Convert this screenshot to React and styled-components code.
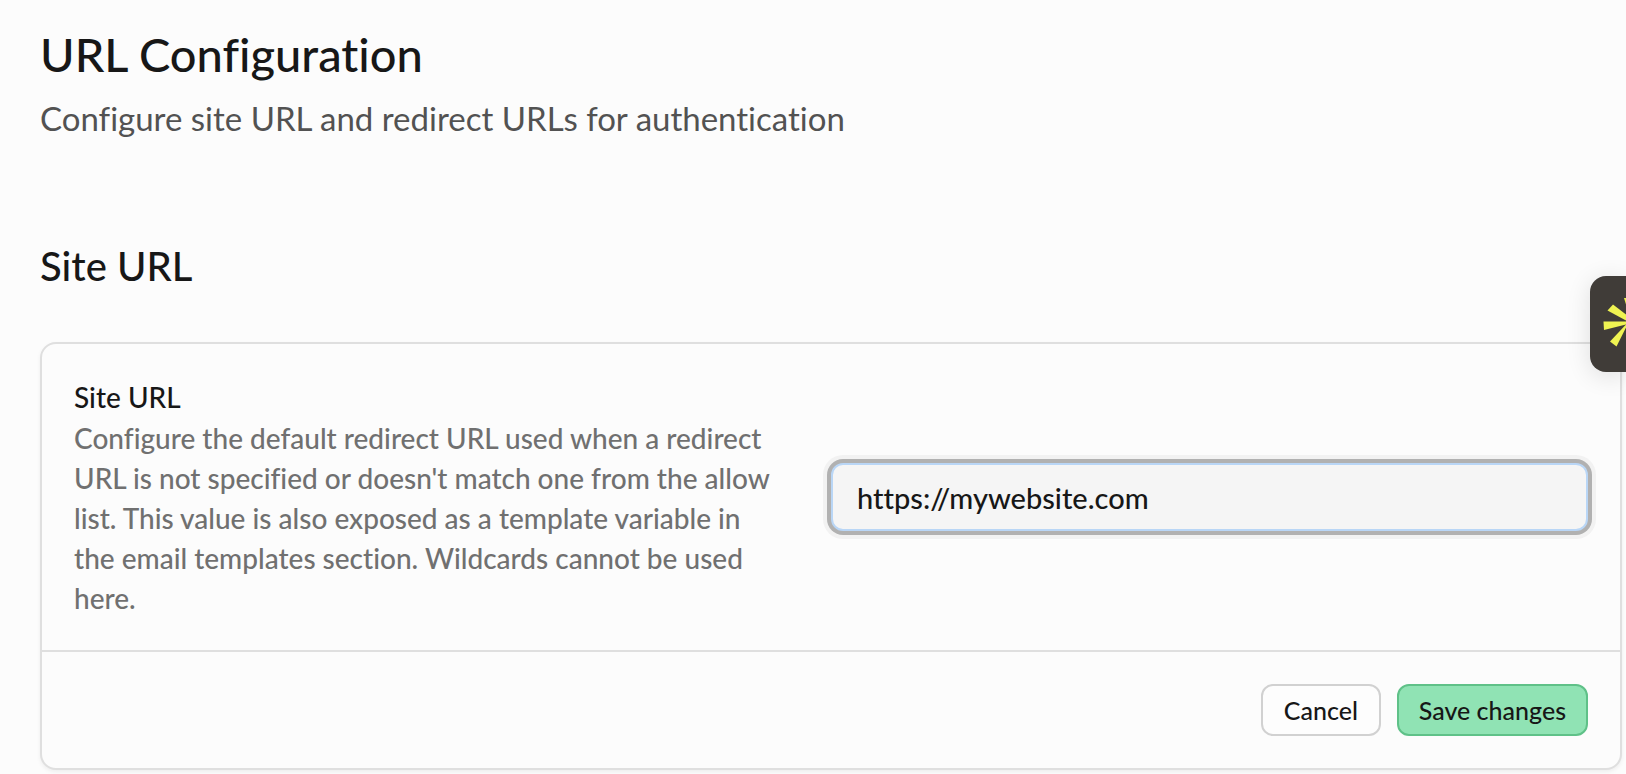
import React, { useState } from "react";
import styled, { createGlobalStyle } from "styled-components";

const GlobalStyle = createGlobalStyle`
  * { box-sizing: border-box; }
  body {
    margin: 0;
    background: #fcfcfc;
    color: #171717;
    font-family: Lato, "Liberation Sans", sans-serif;
    font-weight: 500;
    font-variant-ligatures: none;
    overflow-x: hidden;
  }
`;

const Page = styled.main`
  padding: 20px 4px 4px 40px;
`;

const PageTitle = styled.h1`
  margin: 0 0 6px;
  font-size: 47px;
  line-height: 68px;
  font-weight: 500;
`;

const PageDescription = styled.p`
  margin: 0 0 96px;
  font-size: 33px;
  line-height: 48px;
  font-weight: 400;
  color: #525252;
`;

const SectionTitle = styled.h2`
  margin: 0 0 48px;
  font-size: 40px;
  line-height: 56px;
  font-weight: 500;
`;

const Card = styled.form`
  border: 2px solid #dfdfdf;
  border-radius: 16px;
  background: #fcfcfc;
  box-shadow: 0 2px 4px rgba(0, 0, 0, 0.06);
`;

const FieldRow = styled.div`
  display: grid;
  grid-template-columns: 1fr 1fr;
  align-items: center;
  padding: 32px;
`;

const FieldText = styled.div`
  padding-right: 48px;
  font-size: 28px;
`;

const FieldLabel = styled.label`
  display: block;
  line-height: 42px;
`;

const FieldHelp = styled.p`
  margin: 0;
  line-height: 40px;
  color: #707070;
`;

const TextInput = styled.input`
  width: 100%;
  height: 68px;
  padding: 0 24px;
  border: 2px solid #b9d6f6;
  border-radius: 12px;
  outline: none;
  background: #f5f5f5;
  box-shadow: 0 0 0 4px #b1b1b1, 0 0 0 8px #f2f2f2;
  color: #171717;
  font-family: inherit;
  font-weight: inherit;
  font-variant-ligatures: inherit;
  font-size: 29px;
`;

const CardFooter = styled.footer`
  display: flex;
  justify-content: flex-end;
  gap: 16px;
  padding: 32px;
  border-top: 2px solid #dfdfdf;
`;

const Button = styled.button`
  min-width: 120px;
  height: 52px;
  padding: 0 20px;
  border: 2px solid ${(p) => (p.$primary ? "#5fc188" : "#d1d1d1")};
  border-radius: 12px;
  background: ${(p) => (p.$primary ? "#90e3b4" : "#fdfdfd")};
  color: #171717;
  font-family: inherit;
  font-weight: inherit;
  font-size: 25px;
  cursor: pointer;
`;

const WidgetTab = styled.button`
  position: absolute;
  top: 276px;
  right: 0;
  width: 36px;
  height: 96px;
  padding: 0;
  border: 0;
  border-radius: 16px 0 0 16px;
  background: #403c38;
  box-shadow: 0 4px 24px rgba(0, 0, 0, 0.12);
  overflow: hidden;
  cursor: pointer;
`;

const Burst = () => (
  <svg width="36" height="96" viewBox="0 0 36 96" fill="#eff352" aria-hidden="true" display="block">
    <path d="M13.5 45.5H36V48.5L14 54Z" />
    <path d="M17.5 34.5 23 28.5 36 38.5V44.5Z" />
    <path d="M20 65.5 26.5 70.5 36 51.5V48.5Z" />
    <path d="M34 22H36V28.5Z" />
  </svg>
);

export default function App() {
  const [url, setUrl] = useState("https://mywebsite.com");
  return (
    <>
      <GlobalStyle />
      <Page>
        <PageTitle>URL Configuration</PageTitle>
        <PageDescription>Configure site URL and redirect URLs for authentication</PageDescription>
        <SectionTitle>Site URL</SectionTitle>
        <Card onSubmit={(e) => e.preventDefault()}>
          <FieldRow>
            <FieldText>
              <FieldLabel htmlFor="site-url">Site URL</FieldLabel>
              <FieldHelp id="site-url-help">
                Configure the default redirect URL used when a redirect URL is not specified or
                doesn't match one from the allow list. This value is also exposed as a template
                variable in the email templates section. Wildcards cannot be used here.
              </FieldHelp>
            </FieldText>
            <TextInput
              id="site-url"
              type="text"
              aria-describedby="site-url-help"
              value={url}
              onChange={(e) => setUrl(e.target.value)}
            />
          </FieldRow>
          <CardFooter>
            <Button type="button">Cancel</Button>
            <Button type="submit" $primary>Save changes</Button>
          </CardFooter>
        </Card>
      </Page>
      <WidgetTab type="button" aria-label="Open assistant">
        <Burst />
      </WidgetTab>
    </>
  );
}
